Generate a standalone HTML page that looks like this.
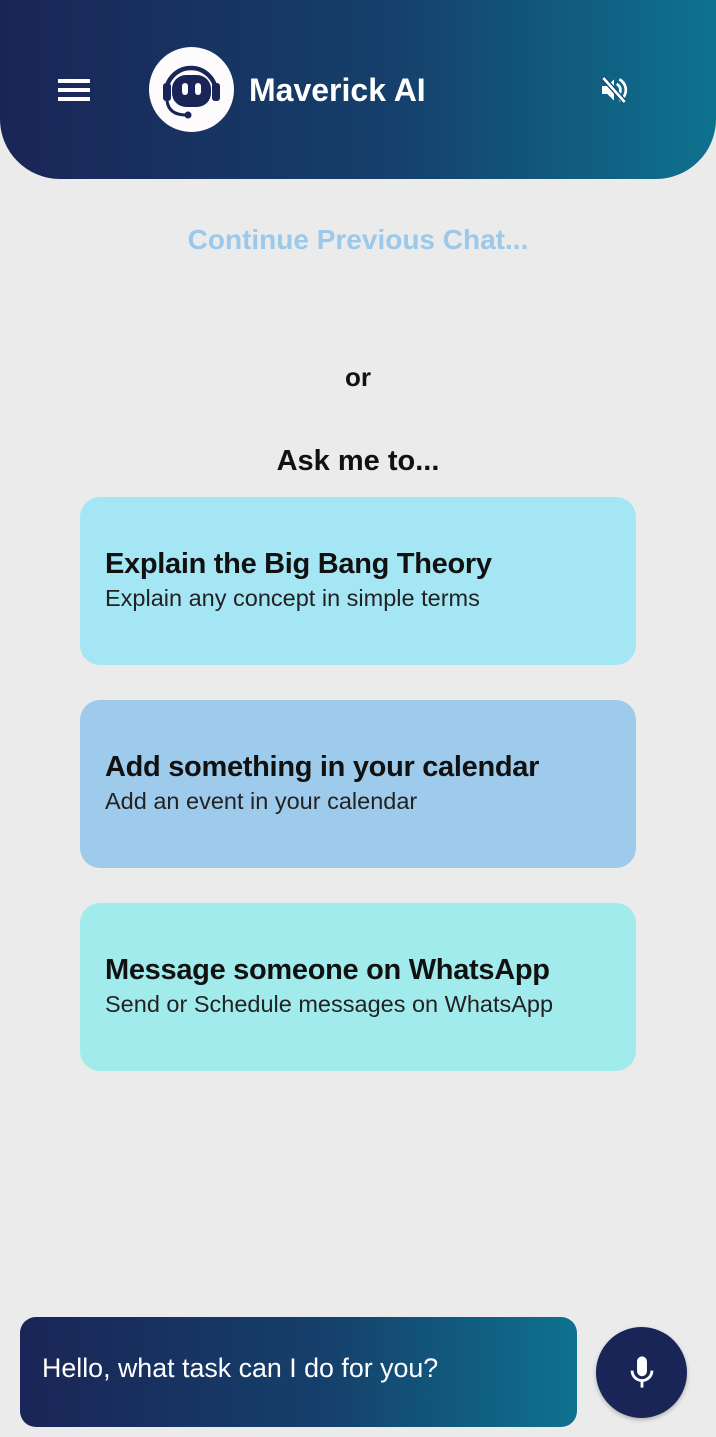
<!DOCTYPE html>
<html><head><meta charset="utf-8"><style>
*{margin:0;padding:0;box-sizing:border-box}
body{width:716px;height:1437px;background:#ebebeb;font-family:"Liberation Sans",sans-serif;position:relative;overflow:hidden}
.hdr{position:absolute;left:0;top:0;width:716px;height:179px;border-radius:0 0 60px 60px;background:linear-gradient(90deg,#1a2557,#15406b 55%,#0e728f)}
.t{position:absolute;color:#fff;font-weight:bold}
.card{position:absolute;left:80px;width:556px;height:168px;border-radius:20px;padding:51px 0 0 25px}
.card h3{font-size:29px;font-weight:bold;color:#111;letter-spacing:-0.3px}
.card p{font-size:23.5px;color:#222;margin-top:4px}
</style></head><body>
<div class="hdr">
 <div style="position:absolute;left:58px;top:79px;width:32px;height:4px;background:#fff;box-shadow:0 9px 0 #fff,0 18px 0 #fff"></div>
 <div style="position:absolute;left:149px;top:47px;width:85px;height:85px;border-radius:50%;background:#fdfbfb"></div>
 <svg style="position:absolute;left:149px;top:47px" width="85" height="85" viewBox="0 0 85 85">
  <path d="M17 46a25 25 0 0 1 50 0" fill="none" stroke="#1a2557" stroke-width="4.5"/>
  <rect x="23" y="28" width="39" height="32" rx="14" fill="#1a2557"/>
  <rect x="14" y="36" width="8" height="18" rx="3" fill="#1a2557"/>
  <rect x="63" y="36" width="8" height="18" rx="3" fill="#1a2557"/>
  <rect x="33" y="36" width="6" height="12" rx="3" fill="#fff"/>
  <rect x="46" y="36" width="6" height="12" rx="3" fill="#fff"/>
  <path d="M18 54q2 14 19 14" fill="none" stroke="#1a2557" stroke-width="3"/>
  <circle cx="39" cy="68" r="3.5" fill="#1a2557"/>
 </svg>
 <div class="t" style="left:249px;top:72px;font-size:32px">Maverick AI</div>
 <svg style="position:absolute;left:597px;top:74px" width="34" height="32" viewBox="0 0 24 24">
  <path d="M3 9v6h4l5 5V4L7 9H3z" fill="#fff"/>
  <path d="M14 7.5a5 5 0 0 1 0 9M16 4a9 9 0 0 1 0 16" fill="none" stroke="#fff" stroke-width="2"/>
  <path d="M4 3l16 18" stroke="#124c74" stroke-width="4"/>
  <path d="M4 3l16 18" stroke="#fff" stroke-width="2"/>
 </svg>
</div>
<div style="position:absolute;top:224px;width:716px;text-align:center;font-size:28px;font-weight:bold;color:#9cc8ea">Continue Previous Chat...</div>
<div style="position:absolute;top:362px;width:716px;text-align:center;font-size:26px;font-weight:bold;color:#111">or</div>
<div style="position:absolute;top:445px;width:716px;text-align:center;font-size:29px;font-weight:bold;color:#111">Ask me to...</div>
<div class="card" style="top:497px;background:#a5e6f4"><h3>Explain the Big Bang Theory</h3><p>Explain any concept in simple terms</p></div>
<div class="card" style="top:700px;background:#9ecaeb"><h3>Add something in your calendar</h3><p>Add an event in your calendar</p></div>
<div class="card" style="top:903px;background:#a2ebec"><h3>Message someone on WhatsApp</h3><p>Send or Schedule messages on WhatsApp</p></div>
<div style="position:absolute;left:20px;top:1317px;width:557px;height:110px;border-radius:16px;background:linear-gradient(90deg,#1a2557,#15406b 55%,#0e728f)">
 <div style="position:absolute;left:22px;top:36px;color:#fff;font-size:26.8px">Hello, what task can I do for you?</div>
</div>
<div style="position:absolute;left:596px;top:1327px;width:91px;height:91px;border-radius:50%;background:#1a2557;box-shadow:0 2px 4px rgba(0,0,0,.25)"></div>
<svg style="position:absolute;left:625px;top:1353px" width="34" height="38" viewBox="0 0 24 26">
 <rect x="8.5" y="2" width="7" height="14" rx="3.5" fill="#fff"/>
 <path d="M5 12a7 7 0 0 0 14 0" fill="none" stroke="#fff" stroke-width="2"/>
 <path d="M12 19v5" stroke="#fff" stroke-width="2"/>
</svg>
</body></html>
